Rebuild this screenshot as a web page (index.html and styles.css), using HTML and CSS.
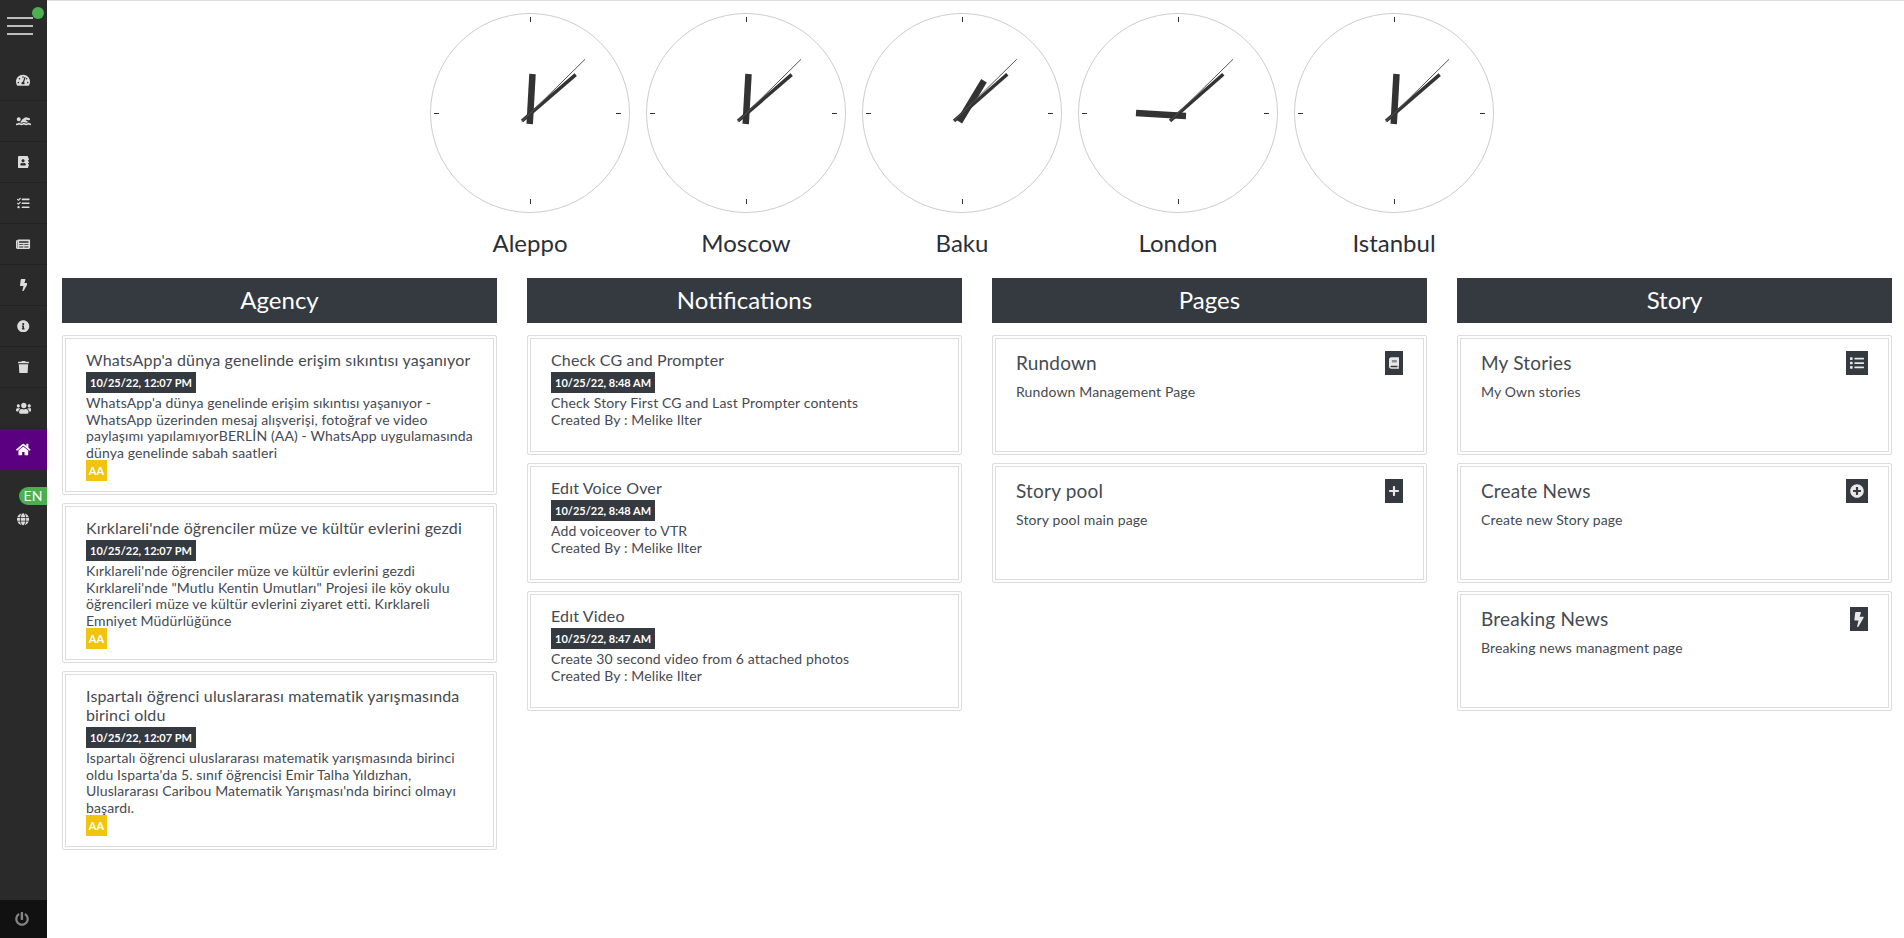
FILE: index.html
```html
<!DOCTYPE html>
<html lang="en">
<head>
<meta charset="utf-8">
<title>Dashboard</title>
<link rel="stylesheet" href="styles.css">
</head>
<body>
<aside class="sidebar">
  <div class="brand">
    <div class="burger"><span></span><span></span><span></span></div>
    <span class="status-dot"></span>
  </div>
  <nav class="nav">
    <a class="nav-item"><svg class="ico" viewBox="0 0 576 512"><path d="M288 32C128.94 32 0 160.94 0 320c0 52.8 14.25 102.26 39.06 144.8 5.61 9.62 16.3 15.2 27.44 15.2h443c11.14 0 21.83-5.58 27.44-15.2C561.75 422.26 576 372.8 576 320c0-159.06-128.94-288-288-288zm0 64c14.71 0 26.58 10.13 30.32 23.65-1.11 2.26-2.64 4.23-3.45 6.67l-9.22 27.67c-5.13 3.49-10.97 6.01-17.64 6.01-17.67 0-32-14.33-32-32S270.33 96 288 96zM96 384c-17.67 0-32-14.33-32-32s14.33-32 32-32 32 14.33 32 32-14.33 32-32 32zm48-160c-17.67 0-32-14.33-32-32s14.33-32 32-32 32 14.33 32 32-14.33 32-32 32zm246.77-72.41l-61.33 184C343.13 347.33 352 364.54 352 384c0 11.72-3.38 22.55-8.88 32H232.88c-5.5-9.45-8.88-20.28-8.88-32 0-33.94 26.5-61.43 59.9-63.59l61.34-184.01c4.17-12.56 17.73-19.45 30.36-15.17 12.57 4.19 19.35 17.79 15.17 30.36zm14.66 57.2l15.52-46.55c3.47-1.29 7.13-2.23 11.05-2.23 17.67 0 32 14.33 32 32s-14.33 32-32 32c-11.38-.01-20.89-6.28-26.57-15.22zM480 384c-17.67 0-32-14.33-32-32s14.33-32 32-32 32 14.33 32 32-14.33 32-32 32z"/></svg></a>
    <a class="nav-item"><svg class="ico" viewBox="0 0 640 512"><path d="M189.61 310.58c3.54 3.26 15.27 9.42 34.39 9.42s30.86-6.16 34.39-9.42c16.02-14.77 34.5-22.58 53.46-22.58h16.3c18.96 0 37.45 7.81 53.46 22.58 3.54 3.26 15.27 9.42 34.39 9.42s30.86-6.16 34.39-9.42c14.86-13.71 31.88-21.12 49.39-22.16l-112.84-80.6 18-12.86c3.64-2.58 8.28-3.52 12.62-2.61l100.35 21.53c25.91 5.53 51.44-10.97 57-36.88 5.55-25.92-10.95-51.44-36.88-57L437.68 98.47c-30.73-6.58-63.02.12-88.56 18.38l-80.02 57.17c-10.38 7.39-19.36 16.44-26.72 26.94L173.75 299c5.47 3.23 10.82 6.93 15.86 11.58zM624 352h-16c-26.04 0-45.8-8.42-56.09-17.9-8.9-8.21-19.66-14.1-31.77-14.1h-16.3c-12.11 0-22.87 5.89-31.77 14.1C461.8 343.58 442.04 352 416 352s-45.8-8.42-56.09-17.9c-8.9-8.21-19.66-14.1-31.77-14.1h-16.3c-12.11 0-22.87 5.89-31.77 14.1C269.8 343.58 250.04 352 224 352s-45.8-8.42-56.09-17.9c-8.9-8.21-19.66-14.1-31.77-14.1h-16.3c-12.11 0-22.87 5.89-31.77 14.1C77.8 343.58 58.04 352 32 352H16c-8.84 0-16 7.16-16 16v32c0 8.84 7.16 16 16 16h16c38.62 0 72.72-12.19 96-31.84 23.28 19.66 57.38 31.84 96 31.84s72.72-12.19 96-31.84c23.28 19.66 57.38 31.84 96 31.84s72.72-12.19 96-31.84c23.28 19.66 57.38 31.84 96 31.84h16c8.84 0 16-7.16 16-16v-32c0-8.84-7.16-16-16-16zm-512-96c44.18 0 80-35.82 80-80s-35.82-80-80-80-80 35.82-80 80 35.82 80 80 80z"/></svg></a>
    <a class="nav-item"><svg class="ico" viewBox="0 0 448 512"><path d="M436 160c6.6 0 12-5.4 12-12v-40c0-6.6-5.4-12-12-12h-20V48c0-26.5-21.5-48-48-48H48C21.5 0 0 21.5 0 48v416c0 26.5 21.5 48 48 48h320c26.5 0 48-21.5 48-48v-48h20c6.6 0 12-5.4 12-12v-40c0-6.6-5.4-12-12-12h-20v-64h20c6.6 0 12-5.4 12-12v-40c0-6.6-5.4-12-12-12h-20v-64h20zm-228-32c35.3 0 64 28.7 64 64s-28.7 64-64 64-64-28.7-64-64 28.7-64 64-64zm112 236.8c0 10.6-10 19.2-22.4 19.2H118.4C106 384 96 375.4 96 364.8v-19.2c0-31.8 30.1-57.6 67.2-57.6h5c12.3 5.1 25.7 8 39.8 8s27.6-2.9 39.8-8h5c37.1 0 67.2 25.8 67.2 57.6v19.2z"/></svg></a>
    <a class="nav-item"><svg class="ico" viewBox="0 0 512 512"><path d="M139.61 35.5a12 12 0 0 0-17 0L58.93 98.81l-22.7-22.12a12 12 0 0 0-17 0L3.53 92.41a12 12 0 0 0 0 17l47.59 47.4a12.78 12.78 0 0 0 17.61 0l15.59-15.62L156.52 69a12.09 12.09 0 0 0 .09-17zm0 159.19a12 12 0 0 0-17 0l-63.68 63.72-22.7-22.1a12 12 0 0 0-17 0L3.53 252a12 12 0 0 0 0 17L51 316.5a12.77 12.77 0 0 0 17.6 0l15.7-15.69 72.2-72.22a12 12 0 0 0 .09-16.9zM64 368c-26.49 0-48.59 21.5-48.59 48S37.53 464 64 464a48 48 0 0 0 0-96zm432 16H208a16 16 0 0 0-16 16v32a16 16 0 0 0 16 16h288a16 16 0 0 0 16-16v-32a16 16 0 0 0-16-16zm0-320H208a16 16 0 0 0-16 16v32a16 16 0 0 0 16 16h288a16 16 0 0 0 16-16V80a16 16 0 0 0-16-16zm0 160H208a16 16 0 0 0-16 16v32a16 16 0 0 0 16 16h288a16 16 0 0 0 16-16v-32a16 16 0 0 0-16-16z"/></svg></a>
    <a class="nav-item"><svg class="ico" viewBox="0 0 576 512"><path d="M552 64H88c-13.255 0-24 10.745-24 24v8H24c-13.255 0-24 10.745-24 24v272c0 30.928 25.072 56 56 56h472c26.51 0 48-21.49 48-48V88c0-13.255-10.745-24-24-24zM56 400a8 8 0 0 1-8-8V144h16v248a8 8 0 0 1-8 8zm236-16H140c-6.627 0-12-5.373-12-12v-8c0-6.627 5.373-12 12-12h152c6.627 0 12 5.373 12 12v8c0 6.627-5.373 12-12 12zm208 0H348c-6.627 0-12-5.373-12-12v-8c0-6.627 5.373-12 12-12h152c6.627 0 12 5.373 12 12v8c0 6.627-5.373 12-12 12zm-208-96H140c-6.627 0-12-5.373-12-12v-8c0-6.627 5.373-12 12-12h152c6.627 0 12 5.373 12 12v8c0 6.627-5.373 12-12 12zm208 0H348c-6.627 0-12-5.373-12-12v-8c0-6.627 5.373-12 12-12h152c6.627 0 12 5.373 12 12v8c0 6.627-5.373 12-12 12zm0-96H140c-6.627 0-12-5.373-12-12v-40c0-6.627 5.373-12 12-12h360c6.627 0 12 5.373 12 12v40c0 6.627-5.373 12-12 12z"/></svg></a>
    <a class="nav-item"><svg class="ico" viewBox="0 0 320 512"><path d="M296 160H180.6l42.6-129.8C227.2 15 215.7 0 200 0H56C44 0 33.8 8.9 32.2 20.8l-32 240C-1.7 275.2 9.5 288 24 288h118.7L96.6 482.5c-3.6 15.2 8 29.5 23.3 29.5 8.4 0 16.4-4.4 20.8-12l176-304c9.3-15.9-2.2-36-20.7-36z"/></svg></a>
    <a class="nav-item"><svg class="ico" viewBox="0 0 512 512"><path d="M256 8C119.043 8 8 119.083 8 256c0 136.997 111.043 248 248 248s248-111.003 248-248C504 119.083 392.957 8 256 8zm0 110c23.196 0 42 18.804 42 42s-18.804 42-42 42-42-18.804-42-42 18.804-42 42-42zm56 254c0 6.627-5.373 12-12 12h-88c-6.627 0-12-5.373-12-12v-24c0-6.627 5.373-12 12-12h12v-64h-12c-6.627 0-12-5.373-12-12v-24c0-6.627 5.373-12 12-12h64c6.627 0 12 5.373 12 12v100h12c6.627 0 12 5.373 12 12v24z"/></svg></a>
    <a class="nav-item"><svg class="ico" viewBox="0 0 448 512"><path d="M432 32H312l-9.4-18.7A24 24 0 0 0 281.1 0H166.8a23.72 23.72 0 0 0-21.4 13.3L136 32H16A16 16 0 0 0 0 48v32a16 16 0 0 0 16 16h416a16 16 0 0 0 16-16V48a16 16 0 0 0-16-16zM53.2 467a48 48 0 0 0 47.9 45h245.8a48 48 0 0 0 47.9-45L416 128H32z"/></svg></a>
    <a class="nav-item"><svg class="ico" viewBox="0 0 640 512"><path d="M96 224c35.3 0 64-28.7 64-64s-28.7-64-64-64-64 28.7-64 64 28.7 64 64 64zm448 0c35.3 0 64-28.7 64-64s-28.7-64-64-64-64 28.7-64 64 28.7 64 64 64zm32 32h-64c-17.6 0-33.5 7.1-45.1 18.6 40.3 22.1 68.9 62 75.1 109.4h66c17.7 0 32-14.3 32-32v-32c0-35.3-28.7-64-64-64zm-256 0c61.9 0 112-50.1 112-112S381.9 32 320 32 208 82.1 208 144s50.1 112 112 112zm76.8 32h-8.3c-20.8 10-43.9 16-68.5 16s-47.6-6-68.5-16h-8.3C179.6 288 128 339.6 128 403.2V432c0 26.5 21.5 48 48 48h288c26.5 0 48-21.5 48-48v-28.8c0-63.6-51.6-115.2-115.2-115.2zm-223.7-13.4C161.5 263.1 145.6 256 128 256H64c-35.3 0-64 28.7-64 64v32c0 17.7 14.3 32 32 32h65.9c6.3-47.4 34.9-87.3 75.2-109.4z"/></svg></a>
    <a class="nav-item active"><svg class="ico" viewBox="0 0 576 512"><path d="M280.37 148.26L96 300.11V464a16 16 0 0 0 16 16l112.06-.29a16 16 0 0 0 15.92-16V368a16 16 0 0 1 16-16h64a16 16 0 0 1 16 16v95.64a16 16 0 0 0 16 16.05L464 480a16 16 0 0 0 16-16V300L295.67 148.26a12.19 12.19 0 0 0-15.3 0zM571.6 251.47L488 182.56V44.05a12 12 0 0 0-12-12h-56a12 12 0 0 0-12 12v72.61L318.47 43a48 48 0 0 0-61 0L4.34 251.47a12 12 0 0 0-1.6 16.9l25.5 31A12 12 0 0 0 45.15 301l235.22-193.74a12.19 12.19 0 0 1 15.3 0L530.9 301a12 12 0 0 0 16.9-1.6l25.5-31a12 12 0 0 0-1.7-16.93z"/></svg></a>
  </nav>
  <div class="lang">
    <span class="lang-badge">EN</span>
    <svg class="ico" viewBox="0 0 496 512"><path d="M336.5 160C322 70.7 287.8 8 248 8s-74 62.7-88.5 152h177zM152 256c0 22.2 1.2 43.5 3.3 64h185.3c2.1-20.5 3.3-41.8 3.3-64s-1.2-43.5-3.3-64H155.3c-2.1 20.5-3.3 41.8-3.3 64zm324.7-96c-28.6-67.9-86.5-120.4-158-141.6 24.4 33.8 41.2 84.7 50 141.6h108zM177.2 18.4C105.8 39.6 47.8 92.1 19.3 160h108c8.7-56.9 25.5-107.8 49.9-141.6zM487.4 192H372.7c2.1 21 3.3 42.5 3.3 64s-1.2 43-3.3 64h114.6c5.5-20.5 8.6-41.8 8.6-64s-3.1-43.5-8.5-64zM120 256c0-21.5 1.2-43 3.3-64H8.6C3.2 212.5 0 233.8 0 256s3.2 43.5 8.6 64h114.6c-2-21-3.2-42.5-3.2-64zm39.5 96c14.5 89.3 48.7 152 88.5 152s74-62.7 88.5-152h-177zm159.3 141.6c71.4-21.2 129.4-73.7 158-141.6h-108c-8.8 56.9-25.6 107.8-50 141.6zM19.3 352c28.6 67.9 86.5 120.4 158 141.6-24.4-33.8-41.2-84.7-50-141.6h-108z"/></svg>
  </div>
  <div class="power">
    <svg class="ico power-ico" viewBox="0 0 512 512"><path d="M400 54.1c63 45 104 118.6 104 201.9 0 136.8-110.8 247.7-247.5 248C120 504.3 8.2 393 8 256.4 7.9 173.1 48.9 99.3 111.8 54.2c11.7-8.3 28-4.8 35 7.7L162.6 90c5.9 10.5 3.1 23.8-6.6 31-41.5 30.8-68 79.6-68 134.9-.1 92.3 74.5 168.1 168 168.1 91.6 0 168.6-74.2 168-169.1-.3-51.8-24.7-101.8-68.1-134-9.7-7.2-12.4-20.5-6.5-30.9l15.8-28.1c7-12.4 23.2-16.1 35-7.7zM296 264V24c0-13.3-10.7-24-24-24h-40c-13.3 0-24 10.7-24 24v240c0 13.3 10.7 24 24 24h40c13.3 0 24-10.7 24-24z"/></svg>
  </div>
</aside>

<main class="main">
  <section class="clocks">
    <figure class="clock">
      <svg class="dial" viewBox="0 0 200 200">
        <circle class="rim" cx="100" cy="100" r="99.5"/>
        <path class="tick" d="M100.5 4v5M100.5 186v5M4 100.5h5M186 100.5h5"/>
        <line class="hour" x1="102.5" y1="61" x2="99.7" y2="111"/>
        <line class="minute" x1="145.7" y1="61.7" x2="92" y2="108"/>
        <line class="second" x1="155" y1="46.3" x2="91.7" y2="108.7"/>
      </svg>
      <figcaption class="city">Aleppo</figcaption>
    </figure>
    <figure class="clock">
      <svg class="dial" viewBox="0 0 200 200">
        <circle class="rim" cx="100" cy="100" r="99.5"/>
        <path class="tick" d="M100.5 4v5M100.5 186v5M4 100.5h5M186 100.5h5"/>
        <line class="hour" x1="102.5" y1="61" x2="99.7" y2="111"/>
        <line class="minute" x1="145.7" y1="61.7" x2="92" y2="108"/>
        <line class="second" x1="155" y1="46.3" x2="91.7" y2="108.7"/>
      </svg>
      <figcaption class="city">Moscow</figcaption>
    </figure>
    <figure class="clock">
      <svg class="dial" viewBox="0 0 200 200">
        <circle class="rim" cx="100" cy="100" r="99.5"/>
        <path class="tick" d="M100.5 4v5M100.5 186v5M4 100.5h5M186 100.5h5"/>
        <line class="hour" x1="122" y1="67.7" x2="97.3" y2="108.7"/>
        <line class="minute" x1="145.3" y1="61.3" x2="92" y2="108"/>
        <line class="second" x1="154.7" y1="46.3" x2="92" y2="108"/>
      </svg>
      <figcaption class="city">Baku</figcaption>
    </figure>
    <figure class="clock">
      <svg class="dial" viewBox="0 0 200 200">
        <circle class="rim" cx="100" cy="100" r="99.5"/>
        <path class="tick" d="M100.5 4v5M100.5 186v5M4 100.5h5M186 100.5h5"/>
        <line class="hour" x1="58" y1="100" x2="108" y2="103"/>
        <line class="minute" x1="145.3" y1="61.3" x2="92" y2="108"/>
        <line class="second" x1="155" y1="46.3" x2="92" y2="108"/>
      </svg>
      <figcaption class="city">London</figcaption>
    </figure>
    <figure class="clock">
      <svg class="dial" viewBox="0 0 200 200">
        <circle class="rim" cx="100" cy="100" r="99.5"/>
        <path class="tick" d="M100.5 4v5M100.5 186v5M4 100.5h5M186 100.5h5"/>
        <line class="hour" x1="102.5" y1="61" x2="99.7" y2="111"/>
        <line class="minute" x1="145.7" y1="61.7" x2="92" y2="108"/>
        <line class="second" x1="155" y1="46.3" x2="91.7" y2="108.7"/>
      </svg>
      <figcaption class="city">Istanbul</figcaption>
    </figure>
  </section>

  <section class="columns">
    <div class="column">
      <h2 class="col-head">Agency</h2>
      <article class="card">
        <h3 class="card-title">WhatsApp'a dünya genelinde erişim sıkıntısı yaşanıyor</h3>
        <span class="date">10/25/22, 12:07 PM</span>
        <p class="card-text">WhatsApp'a dünya genelinde erişim sıkıntısı yaşanıyor - WhatsApp üzerinden mesaj alışverişi, fotoğraf ve video paylaşımı yapılamıyorBERLİN (AA) - WhatsApp uygulamasında dünya genelinde sabah saatleri</p>
        <span class="source">AA</span>
      </article>
      <article class="card">
        <h3 class="card-title">Kırklareli'nde öğrenciler müze ve kültür evlerini gezdi</h3>
        <span class="date">10/25/22, 12:07 PM</span>
        <p class="card-text">Kırklareli'nde öğrenciler müze ve kültür evlerini gezdi Kırklareli'nde "Mutlu Kentin Umutları" Projesi ile köy okulu öğrencileri müze ve kültür evlerini ziyaret etti. Kırklareli Emniyet Müdürlüğünce</p>
        <span class="source">AA</span>
      </article>
      <article class="card">
        <h3 class="card-title">Ispartalı öğrenci uluslararası matematik yarışmasında birinci oldu</h3>
        <span class="date">10/25/22, 12:07 PM</span>
        <p class="card-text">Ispartalı öğrenci uluslararası matematik yarışmasında birinci oldu Isparta'da 5. sınıf öğrencisi Emir Talha Yıldızhan, Uluslararası Caribou Matematik Yarışması'nda birinci olmayı başardı.</p>
        <span class="source">AA</span>
      </article>
    </div>

    <div class="column">
      <h2 class="col-head">Notifications</h2>
      <article class="card card-fixed">
        <h3 class="card-title">Check CG and Prompter</h3>
        <span class="date">10/25/22, 8:48 AM</span>
        <p class="card-text">Check Story First CG and Last Prompter contents<br>Created By : Melike Ilter</p>
      </article>
      <article class="card card-fixed">
        <h3 class="card-title">Edıt Voice Over</h3>
        <span class="date">10/25/22, 8:48 AM</span>
        <p class="card-text">Add voiceover to VTR<br>Created By : Melike Ilter</p>
      </article>
      <article class="card card-fixed">
        <h3 class="card-title">Edıt Video</h3>
        <span class="date">10/25/22, 8:47 AM</span>
        <p class="card-text">Create 30 second video from 6 attached photos<br>Created By : Melike Ilter</p>
      </article>
    </div>

    <div class="column">
      <h2 class="col-head">Pages</h2>
      <article class="card card-fixed card-link">
        <div class="link-body">
          <h3 class="link-title">Rundown</h3>
          <p class="link-text">Rundown Management Page</p>
        </div>
        <span class="link-icon"><svg class="ico-book" viewBox="0 0 448 512"><path d="M448 360V24c0-13.3-10.7-24-24-24H96C43 0 0 43 0 96v320c0 53 43 96 96 96h328c13.3 0 24-10.7 24-24v-16c0-7.5-3.5-14.3-8.9-18.7-4.2-15.4-4.2-59.3 0-74.7 5.4-4.3 8.9-11.1 8.9-18.6zM128 134c0-3.3 2.7-6 6-6h212c3.3 0 6 2.7 6 6v20c0 3.3-2.7 6-6 6H134c-3.3 0-6-2.7-6-6v-20zm0 64c0-3.3 2.7-6 6-6h212c3.3 0 6 2.7 6 6v20c0 3.3-2.7 6-6 6H134c-3.3 0-6-2.7-6-6v-20zm253.4 250H96c-17.7 0-32-14.3-32-32 0-17.6 14.4-32 32-32h285.4c-1.9 17.1-1.9 46.9 0 64z"/></svg></span>
      </article>
      <article class="card card-fixed card-link">
        <div class="link-body">
          <h3 class="link-title">Story pool</h3>
          <p class="link-text">Story pool main page</p>
        </div>
        <span class="link-icon"><svg class="ico-book" viewBox="0 0 448 512"><path d="M416 208H272V64c0-17.67-14.33-32-32-32h-32c-17.67 0-32 14.33-32 32v144H32c-17.67 0-32 14.33-32 32v32c0 17.67 14.33 32 32 32h144v144c0 17.67 14.33 32 32 32h32c17.67 0 32-14.33 32-32V304h144c17.67 0 32-14.33 32-32v-32c0-17.67-14.33-32-32-32z"/></svg></span>
      </article>
    </div>

    <div class="column">
      <h2 class="col-head">Story</h2>
      <article class="card card-fixed card-link">
        <div class="link-body">
          <h3 class="link-title">My Stories</h3>
          <p class="link-text">My Own stories</p>
        </div>
        <span class="link-icon"><svg class="ico-badge" viewBox="0 0 512 512"><path d="M80 368H16a16 16 0 0 0-16 16v64a16 16 0 0 0 16 16h64a16 16 0 0 0 16-16v-64a16 16 0 0 0-16-16zm0-320H16A16 16 0 0 0 0 64v64a16 16 0 0 0 16 16h64a16 16 0 0 0 16-16V64a16 16 0 0 0-16-16zm0 160H16a16 16 0 0 0-16 16v64a16 16 0 0 0 16 16h64a16 16 0 0 0 16-16v-64a16 16 0 0 0-16-16zm416 176H176a16 16 0 0 0-16 16v32a16 16 0 0 0 16 16h320a16 16 0 0 0 16-16v-32a16 16 0 0 0-16-16zm0-320H176a16 16 0 0 0-16 16v32a16 16 0 0 0 16 16h320a16 16 0 0 0 16-16V80a16 16 0 0 0-16-16zm0 160H176a16 16 0 0 0-16 16v32a16 16 0 0 0 16 16h320a16 16 0 0 0 16-16v-32a16 16 0 0 0-16-16z"/></svg></span>
      </article>
      <article class="card card-fixed card-link">
        <div class="link-body">
          <h3 class="link-title">Create News</h3>
          <p class="link-text">Create new Story page</p>
        </div>
        <span class="link-icon"><svg class="ico-badge" viewBox="0 0 512 512"><path d="M256 8C119 8 8 119 8 256s111 248 248 248 248-111 248-248S393 8 256 8zm144 276c0 6.6-5.4 12-12 12h-92v92c0 6.6-5.4 12-12 12h-56c-6.6 0-12-5.4-12-12v-92h-92c-6.6 0-12-5.4-12-12v-56c0-6.6 5.4-12 12-12h92v-92c0-6.6 5.4-12 12-12h56c6.6 0 12 5.4 12 12v92h92c6.6 0 12 5.4 12 12v56z"/></svg></span>
      </article>
      <article class="card card-fixed card-link">
        <div class="link-body">
          <h3 class="link-title">Breaking News</h3>
          <p class="link-text">Breaking news managment page</p>
        </div>
        <span class="link-icon"><svg class="ico-bolt" viewBox="0 0 320 512"><path d="M296 160H180.6l42.6-129.8C227.2 15 215.7 0 200 0H56C44 0 33.8 8.9 32.2 20.8l-32 240C-1.7 275.2 9.5 288 24 288h118.7L96.6 482.5c-3.6 15.2 8 29.5 23.3 29.5 8.4 0 16.4-4.4 20.8-12l176-304c9.3-15.9-2.2-36-20.7-36z"/></svg></span>
      </article>
    </div>
  </section>
</main>
</body>
</html>
```

FILE: styles.css
```css
* { box-sizing: border-box; }

html, body { height: 100%; }

body {
  margin: 0;
  display: flex;
  height: 938px;
  overflow: hidden;
  background: #fff;
  color: #454a52;
  font-family: "Lato", "Open Sans", sans-serif;
}

/* Sidebar */
.sidebar {
  position: relative;
  flex: 0 0 47px;
  width: 47px;
  display: flex;
  flex-direction: column;
  background: #2a2a2a;
}

.brand {
  position: relative;
  height: 60px;
  padding: 17px 0 0 7px;
}

.burger {
  display: flex;
  flex-direction: column;
  gap: 6px;
  width: 26px;
}

.burger span {
  display: block;
  height: 2px;
  background: #bdbdbd;
}

.status-dot {
  position: absolute;
  top: 7px;
  right: 3px;
  width: 12px;
  height: 12px;
  border-radius: 50%;
  background: #4caf50;
}

.nav { display: flex; flex-direction: column; }

.nav-item {
  display: flex;
  align-items: center;
  justify-content: center;
  height: 41px;
  border-bottom: 1px solid #222;
}

.ico {
  display: block;
  height: 12.5px;
  width: auto;
  fill: #dcdcdc;
}

.nav-item.active {
  height: 40px;
  background: #5c0082;
  border-bottom: 0;
}

.nav-item.active .ico { height: 13px; fill: #fff; }

.lang {
  position: relative;
  margin-top: 30px;
  height: 41px;
  display: flex;
  align-items: center;
  justify-content: center;
}

.lang-badge {
  position: absolute;
  top: -12px;
  right: 0;
  width: 28px;
  height: 18px;
  border-radius: 9px 0 0 9px;
  background: #4caf50;
  color: #fff;
  font-size: 14px;
  line-height: 18px;
  text-align: center;
}

.power {
  margin-top: auto;
  height: 38px;
  padding-right: 3px;
  display: flex;
  align-items: center;
  justify-content: center;
  background: #111;
}

.power .power-ico { height: 14px; fill: #858585; }

/* Main */
.main {
  flex: 1;
  min-width: 0;
  border-top: 1px solid #ddd;
}

.clocks {
  display: flex;
  justify-content: center;
  gap: 16px;
  padding: 12px 27px 0 0;
}

.clock {
  margin: 0;
  width: 200px;
}

.dial {
  display: block;
  width: 200px;
  height: 200px;
}

.rim { fill: #fff; stroke: #ccc; stroke-width: 1; }
.tick { fill: none; stroke: #333; stroke-width: 1; }
.hour { stroke: #333; stroke-width: 6.5; }
.minute { stroke: #333; stroke-width: 3.5; }
.second { stroke: #555; stroke-width: 1; }

.city {
  margin-top: 15px;
  height: 50px;
  font-size: 24px;
  line-height: 30px;
  text-align: center;
  color: #2b2f36;
}

.columns {
  display: grid;
  grid-template-columns: repeat(4, 435px);
  column-gap: 30px;
  padding-left: 15px;
  align-items: start;
}

.col-head {
  margin: 0 0 12px;
  height: 45px;
  background: #343a40;
  color: #fff;
  font-size: 24px;
  font-weight: 400;
  line-height: 43px;
  text-align: center;
}

/* Cards: a thin frame around an inset frame */
.card {
  position: relative;
  margin-bottom: 8px;
  padding: 14px 23px 13px;
  border: 1px solid #ddd;
  border-radius: 2px;
  background: #fff;
  box-shadow: inset 0 0 0 2px #fff, inset 0 0 0 3px #ddd;
}

.card-fixed { height: 120px; }

.card-link { padding-top: 15px; }

.card-title {
  margin: 0 0 3px;
  font-size: 16px;
  font-weight: 400;
  line-height: 19px;
  letter-spacing: 0.15px;
}

.date {
  display: block;
  width: max-content;
  height: 21px;
  padding: 0 4px;
  background: #343a40;
  color: #fff;
  font-size: 11px;
  font-weight: 700;
  line-height: 21px;
}

.card-text {
  margin: 2px 0 -1px;
  font-size: 14px;
  line-height: 16.5px;
  letter-spacing: 0.13px;
}

.source {
  display: block;
  width: 21px;
  height: 21px;
  background: #f1c40f;
  color: #fff;
  font-size: 11px;
  font-weight: 700;
  line-height: 21px;
  text-align: center;
}

.card-link {
  display: flex;
  justify-content: space-between;
  align-items: flex-start;
}

.link-title {
  margin: 1px 0 9px;
  font-size: 19px;
  font-weight: 400;
  line-height: 22px;
  letter-spacing: 0.2px;
}

.link-text {
  margin: 0;
  font-size: 14px;
  line-height: 17px;
  letter-spacing: 0.13px;
}

.link-icon {
  display: flex;
  align-items: center;
  justify-content: center;
  height: 24px;
  padding: 0 4px;
  background: #343a40;
}

.ico-book { display: block; height: 14px; width: 10px; fill: #e8e8e8; }
.ico-badge { display: block; height: 14px; width: 14px; fill: #e8e8e8; }
.ico-bolt { display: block; height: 15px; width: 10px; fill: #e8e8e8; }
```
